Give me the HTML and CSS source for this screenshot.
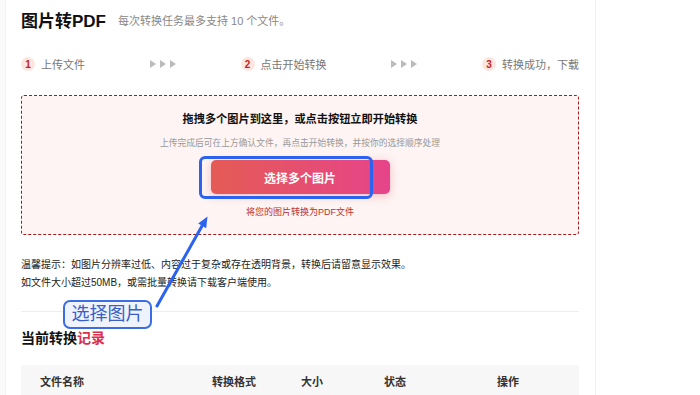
FILE: index.html
```html
<!DOCTYPE html>
<html lang="zh-CN">
<head>
    <meta charset="UTF-8">
    <meta name="viewport" content="width=device-width, initial-scale=1.0">
    <title>图片转PDF</title>
    <link rel="stylesheet" href="styles.css">
</head>
<body>
    <div class="app">
        <div class="edge"></div>

        <div class="main">
            <div class="header">
                <div class="title">图片转PDF</div>
                <div class="subtitle">每次转换任务最多支持 10 个文件。</div>
            </div>

            <div class="steps">
                <div class="step"><span class="step-num">1</span>上传文件</div>
                <div class="step-arrows"><i></i><i></i><i></i></div>
                <div class="step"><span class="step-num">2</span>点击开始转换</div>
                <div class="step-arrows"><i></i><i></i><i></i></div>
                <div class="step"><span class="step-num">3</span>转换成功，下载</div>
            </div>

            <div class="drop-zone">
                <div class="drop-title">拖拽多个图片到这里，或点击按钮立即开始转换</div>
                <div class="drop-sub">上传完成后可在上方确认文件，再点击开始转换，并按你的选择顺序处理</div>
                <button class="pick-btn">选择多个图片</button>
                <div class="drop-caption">将您的图片转换为PDF文件</div>
            </div>

            <div class="tips">
                <p>温馨提示：如图片分辨率过低、内容过于复杂或存在透明背景，转换后请留意显示效果。</p>
                <p>如文件大小超过50MB，或需批量转换请下载客户端使用。</p>
            </div>

            <div class="records">
                <div class="records-title">当前转换<span class="accent">记录</span></div>
                <div class="table-head">
                    <div>文件名称</div>
                    <div>转换格式</div>
                    <div>大小</div>
                    <div>状态</div>
                    <div>操作</div>
                </div>
            </div>
        </div>

        <!-- annotation overlay -->
        <div class="mark-box"></div>
        <svg class="mark-arrow" width="700" height="395" viewBox="0 0 700 395">
            <line x1="157" y1="306" x2="202" y2="226" stroke="#2b63ee" stroke-width="3" stroke-linecap="round"/>
            <polygon points="207.5,216.5 206.2,228.2 198.2,223.6" fill="#2b63ee"/>
        </svg>
        <div class="mark-label">选择图片</div>
    </div>
</body>
</html>
```

FILE: styles.css
```css
* {
    margin: 0;
    padding: 0;
    box-sizing: border-box;
}

body {
    font-family: 'Liberation Sans', 'Noto Sans CJK SC', sans-serif;
    background: white;
    color: #222;
}

.app {
    position: relative;
    display: flex;
    width: 700px;
    height: 395px;
    overflow: hidden;
}

.edge {
    width: 6px;
    background: #fafafa;
    border-right: 1px solid #f2f2f2;
}

.main {
    width: 590px;
    padding: 0 16px 0 15px;
    border-right: 1px solid #f0f0f0;
}

.header {
    display: flex;
    align-items: center;
    gap: 12px;
    height: 38px;
}

.title {
    font-size: 17px;
    font-weight: bold;
    color: #111;
}

.subtitle {
    font-size: 11px;
    color: #888;
    padding-top: 1px;
}

.steps {
    display: flex;
    justify-content: space-between;
    align-items: center;
    height: 14px;
    margin-top: 19px;
}

.step {
    display: flex;
    align-items: center;
    gap: 6px;
    font-size: 11px;
    color: #777;
}

.step-num {
    width: 14px;
    height: 14px;
    border-radius: 50%;
    background: #fde5e0;
    color: #c6221c;
    font-size: 10px;
    font-weight: bold;
    display: flex;
    justify-content: center;
    align-items: center;
}

.step-arrows {
    display: flex;
    gap: 4px;
}

.step-arrows i {
    width: 0;
    height: 0;
    border-left: 6px solid #bbb;
    border-top: 4px solid transparent;
    border-bottom: 4px solid transparent;
}

.drop-zone {
    margin-top: 24px;
    border: 1px dashed #a8191c;
    border-radius: 3px;
    background: #fdf4f3;
    padding: 14px 0 16px;
    display: flex;
    flex-direction: column;
    align-items: center;
}

.drop-title {
    font-size: 11.2px;
    font-weight: bold;
    color: #111;
    line-height: 18px;
}

.drop-sub {
    margin-top: 8px;
    font-size: 8.75px;
    line-height: 14px;
    color: #999;
}

.pick-btn {
    margin-top: 10px;
    width: 179px;
    height: 34px;
    border: none;
    border-radius: 5px;
    background: linear-gradient(90deg, #e45b55, #e6448a);
    color: white;
    font-family: inherit;
    font-size: 12px;
    font-weight: bold;
    box-shadow: 0 2px 9px rgba(232, 80, 100, 0.35);
}

.drop-caption {
    margin-top: 12px;
    font-size: 9px;
    line-height: 12px;
    color: #c0302a;
}

.tips {
    margin-top: 21px;
    font-size: 10px;
    line-height: 18px;
    color: #222;
    padding-bottom: 19px;
    border-bottom: 1px solid #eee;
}

.records-title {
    margin-top: 17px;
    font-size: 14px;
    font-weight: 600;
    line-height: 18px;
    color: #111;
}

.records-title .accent {
    color: #d9304f;
}

.table-head {
    margin-top: 18px;
    height: 32px;
    background: #f7f7f7;
    padding-left: 19px;
    display: grid;
    grid-template-columns: 172px 89px 83px 113px 1fr;
    align-items: center;
    font-size: 11px;
    font-weight: 600;
    color: #333;
}

/* annotation overlay */
.mark-box {
    position: absolute;
    left: 199px;
    top: 156px;
    width: 174px;
    height: 43px;
    border: 3px solid #2b63ee;
    border-radius: 6px;
}

.mark-arrow {
    position: absolute;
    left: 0;
    top: 0;
}

.mark-label {
    position: absolute;
    left: 63px;
    top: 300px;
    width: 89px;
    height: 29px;
    border: 2px solid #3a6de6;
    border-radius: 7px;
    background: #eef3fd;
    color: #3a5fc8;
    font-size: 18px;
    line-height: 25px;
    text-align: center;
}
```
